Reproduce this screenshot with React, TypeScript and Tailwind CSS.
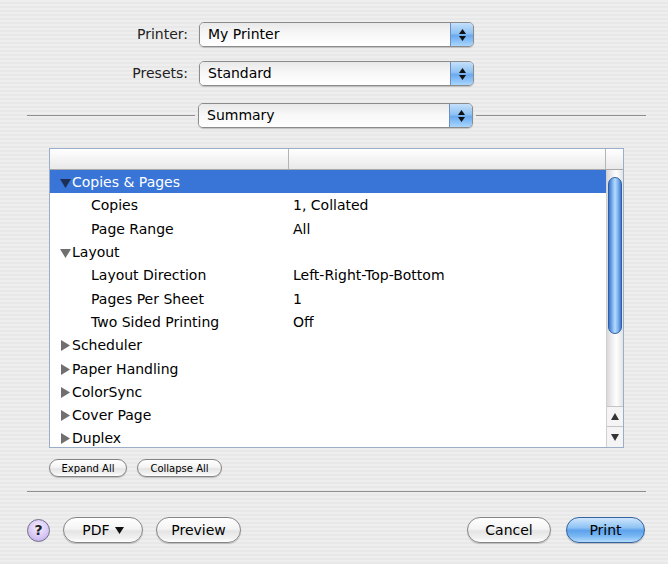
import type { ReactNode } from 'react';

type Row = { label: string; value?: string; kind: 'open' | 'closed' | 'child'; selected?: boolean };

const ROWS: Row[] = [
  { label: 'Copies & Pages', kind: 'open', selected: true },
  { label: 'Copies', value: '1, Collated', kind: 'child' },
  { label: 'Page Range', value: 'All', kind: 'child' },
  { label: 'Layout', kind: 'open' },
  { label: 'Layout Direction', value: 'Left-Right-Top-Bottom', kind: 'child' },
  { label: 'Pages Per Sheet', value: '1', kind: 'child' },
  { label: 'Two Sided Printing', value: 'Off', kind: 'child' },
  { label: 'Scheduler', kind: 'closed' },
  { label: 'Paper Handling', kind: 'closed' },
  { label: 'ColorSync', kind: 'closed' },
  { label: 'Cover Page', kind: 'closed' },
  { label: 'Duplex', kind: 'closed' },
];

function PopUp({ text }: { text: string }) {
  return (
    <div className="flex h-[25px] w-[275px] overflow-hidden rounded-[5px] border border-[#8b8b8b] shadow-[0_1px_1px_rgba(0,0,0,0.18)]">
      <div className="flex flex-1 items-center bg-[linear-gradient(180deg,#e9e9e9_0%,#f7f7f7_45%,#ffffff_100%)] pl-[8px] text-[14px] text-black">
        {text}
      </div>
      <div className="flex w-[23px] flex-col items-center justify-center gap-[2px] border-l border-[#6b8fc0] bg-[linear-gradient(180deg,#c4e0fb_0%,#8fc2f3_45%,#6aaaf0_55%,#a9d6fd_100%)]">
        <svg width="7" height="5" viewBox="0 0 7 5"><polygon points="3.5,0 7,5 0,5" fill="#111" /></svg>
        <svg width="7" height="5" viewBox="0 0 7 5"><polygon points="0,0 7,0 3.5,5" fill="#111" /></svg>
      </div>
    </div>
  );
}

function Pill({ children, className, blue }: { children: ReactNode; className: string; blue?: boolean }) {
  return (
    <div
      className={
        'flex items-center justify-center rounded-full border text-black shadow-[0_1px_1px_rgba(0,0,0,0.2)] ' +
        (blue
          ? 'border-[#34619f] bg-[linear-gradient(180deg,#cfe6fc_0%,#8ec3f4_40%,#5ea2ec_52%,#78b7f3_75%,#b5dcfd_100%)] '
          : 'border-[#858585] bg-[linear-gradient(180deg,#ffffff_0%,#f4f4f4_45%,#e4e4e4_55%,#f2f2f2_85%,#ffffff_100%)] ') +
        className
      }
    >
      {children}
    </div>
  );
}

function Disclosure({ open, selected }: { open: boolean; selected?: boolean }) {
  const fill = selected ? '#1d2f55' : '#707070';
  return open ? (
    <svg width="11" height="10" viewBox="0 0 11 10" className="mr-[1px]"><polygon points="0,1 11,1 5.5,10" fill={fill} /></svg>
  ) : (
    <svg width="11" height="11" viewBox="0 0 11 11" className="mr-[1px]"><polygon points="1,0 10,5.5 1,11" fill={fill} /></svg>
  );
}

function OutlineRow({ row }: { row: Row }) {
  return (
    <div className={'flex h-[23.3px] shrink-0 items-center pt-[2px] ' + (row.selected ? 'bg-[#3875d7] text-white' : 'text-black')}>
      <div className={'flex w-[239px] items-center ' + (row.kind === 'child' ? 'pl-[41px]' : 'pl-[10px]')}>
        {row.kind !== 'child' && <Disclosure open={row.kind === 'open'} selected={row.selected} />}
        <span>{row.label}</span>
      </div>
      {row.value && <span className="pl-[4px]">{row.value}</span>}
    </div>
  );
}

export default function App() {
  return (
    <div className="h-[564px] w-[668px] overflow-hidden bg-[repeating-linear-gradient(180deg,#eeeeee_0px,#eeeeee_2px,#e8e8e8_2px,#e8e8e8_4px)] font-['DejaVu_Sans',sans-serif] text-[14px] text-black">
      {/* printer + presets */}
      <div className="flex items-center pt-[22px]">
        <div className="w-[188px] text-right text-[#222]">Printer:</div>
        <div className="ml-[11px]">
          <PopUp text="My Printer" />
        </div>
      </div>
      <div className="mt-[14px] flex items-center">
        <div className="w-[188px] text-right text-[#222]">Presets:</div>
        <div className="ml-[11px]">
          <PopUp text="Standard" />
        </div>
      </div>
      <div className="mt-[17px] flex items-center pl-[27px] pr-[22px]">
        <div className="h-px flex-1 bg-[#8e8e8e]" />
        <div className="mx-[3px]">
          <PopUp text="Summary" />
        </div>
        <div className="h-px w-[170px] bg-[#8e8e8e]" />
      </div>

      {/* summary outline */}
      <div className="ml-[49px] mt-[20px] flex h-[300px] w-[575px] flex-col overflow-hidden border border-[#9aaec8] bg-white">
        <div className="flex h-[21px] shrink-0 border-b border-[#a8a8a8] bg-[linear-gradient(180deg,#ffffff_0%,#f4f4f4_50%,#e9e9e9_100%)]">
          <div className="w-[239px] border-r border-[#b4b4b4]" />
          <div className="flex-1 border-r border-[#b4b4b4]" />
          <div className="w-[17px]" />
        </div>
        <div className="flex min-h-0 flex-1">
          <div className="flex flex-1 flex-col overflow-hidden">
            {ROWS.map((row) => (
              <OutlineRow key={row.label} row={row} />
            ))}
          </div>
          <div className="flex w-[17px] flex-col border-l border-[#d0d0d0] bg-[linear-gradient(90deg,#d9d9d9_0%,#f7f7f7_45%,#fdfdfd_60%,#e3e3e3_100%)]">
            <div className="flex flex-1 flex-col px-[1px] pt-[7px]">
              <div className="h-[157px] rounded-full border border-[#2f5fa8] bg-[linear-gradient(90deg,#3f75c9_0%,#7fb6f1_30%,#b8dafc_50%,#7cb3ef_75%,#3f78cc_100%)]" />
              <div className="flex-1" />
            </div>
            <div className="flex h-[20px] items-center justify-center border-t border-[#c4c4c4] bg-[#f4f4f4]">
              <svg width="8" height="7" viewBox="0 0 8 7"><polygon points="4,0 8,7 0,7" fill="#333" /></svg>
            </div>
            <div className="flex h-[21px] items-center justify-center border-t border-[#c4c4c4] bg-[#f4f4f4]">
              <svg width="8" height="7" viewBox="0 0 8 7"><polygon points="0,0 8,0 4,7" fill="#333" /></svg>
            </div>
          </div>
        </div>
      </div>

      {/* expand / collapse */}
      <div className="ml-[49px] mt-[11px] flex gap-[10px] text-[10px]">
        <Pill className="h-[18px] w-[78px] text-[10px]">Expand All</Pill>
        <Pill className="h-[18px] w-[85px] text-[10px]">Collapse All</Pill>
      </div>

      <div className="ml-[27px] mr-[22px] mt-[14px] h-px bg-[#8e8e8e]" />

      {/* bottom buttons */}
      <div className="mt-[25px] flex items-center pl-[27px] pr-[23px]">
        <div className="flex h-[23px] w-[23px] items-center justify-center rounded-full border border-[#6f6f8a] bg-[radial-gradient(circle_at_50%_35%,#f4eefe_0%,#d9c9f6_55%,#b9a4e6_100%)] text-[14px] font-bold text-[#222]">
          ?
        </div>
        <Pill className="ml-[13px] h-[26px] w-[80px]">
          <span>PDF</span>
          <svg width="9" height="7" viewBox="0 0 9 7" className="ml-[5px]"><polygon points="0,0 9,0 4.5,7" fill="#111" /></svg>
        </Pill>
        <Pill className="ml-[13px] h-[26px] w-[85px]">Preview</Pill>
        <div className="flex-1" />
        <Pill className="h-[26px] w-[84px]">Cancel</Pill>
        <Pill blue className="ml-[15px] h-[26px] w-[79px]">Print</Pill>
      </div>
    </div>
  );
}
